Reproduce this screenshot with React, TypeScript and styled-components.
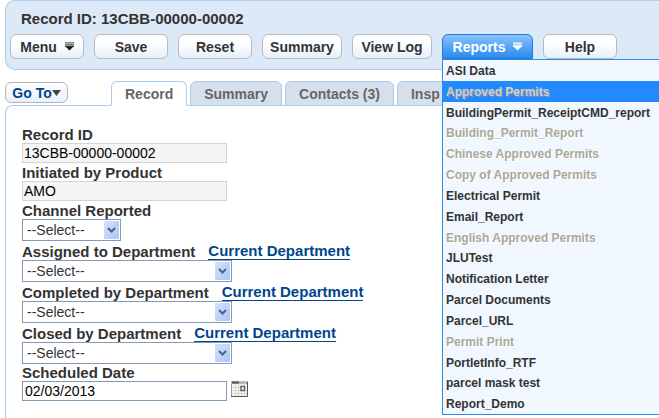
import React from "react";
import styled, { createGlobalStyle, css } from "styled-components";

const GlobalStyle = createGlobalStyle`
  * { box-sizing: border-box; }
  body { margin: 0; background: #fff; color: #333; font-family: "Liberation Sans", Arial, sans-serif; }
  button, input, select { font-family: inherit; margin: 0; }
`;

const Page = styled.div`
  display: flex;
  flex-direction: column;
  min-height: 100vh;
  padding-left: 5px;
  overflow: hidden;
`;

const Header = styled.header`
  padding: 9px 0 10px 4px;
  border: 1px solid #b0cdea;
  border-right: 0;
  border-radius: 10px 0 0 10px;
  background: #dce9f6;
`;

const Title = styled.h1`
  margin: 0 0 6px 11px;
  font-size: 15px;
  line-height: 18px;
`;

const Toolbar = styled.div`
  display: flex;
  gap: 10px;
`;

const MenuAnchor = styled.div`
  position: relative;
`;

const ToolButton = styled.button<{ $wide?: boolean; $active?: boolean }>`
  display: flex;
  align-items: center;
  justify-content: center;
  gap: 8px;
  height: 25px;
  min-width: ${(p) => (p.$wide ? 80 : 74)}px;
  padding: 0 7px;
  border: 1px solid #b9b9b9;
  border-radius: 6px;
  background: linear-gradient(#fff, #fbfdff 45%, #e6effa);
  color: #333;
  font-size: 14px;
  font-weight: bold;
  line-height: 18px;
  white-space: nowrap;
  ${(p) =>
    p.$active &&
    css`
      min-width: 91px;
      border-color: #1d7bdd;
      border-radius: 6px 6px 0 0;
      background: linear-gradient(#8cc2fc, #5ba8f8 45%, #2c8bee);
      color: #fff;
    `}
`;

const Dropdown = styled.ul`
  position: absolute;
  z-index: 2;
  top: 100%;
  left: 0;
  display: flex;
  flex-direction: column;
  width: 240px;
  max-height: calc(100vh - 62px);
  margin: 0;
  padding: 0;
  border: 1px solid #2f8be8;
  background: #f0f7ff;
  list-style: none;
`;

const DropdownRow = styled.li`
  display: flex;
  flex: 0 1 21px;
  min-height: 16px;
`;

const DropdownItem = styled.button<{ $hot?: boolean }>`
  flex: 1;
  padding: 1px 3px 0;
  border: 0;
  background: ${(p) => (p.$hot ? "#2389ff" : "transparent")};
  color: #333;
  font-size: 12px;
  font-weight: bold;
  line-height: 16px;
  text-align: left;
  white-space: nowrap;

  &:disabled {
    color: ${(p) => (p.$hot ? "#d3d3cb" : "#aca899")};
    text-shadow: 1px 1px 0 ${(p) => (p.$hot ? "#8a9099" : "#fff")};
  }
`;

const TabBar = styled.div`
  display: flex;
  align-items: flex-start;
  margin-top: 11px;
`;

const GoToButton = styled.button`
  display: flex;
  align-items: center;
  justify-content: center;
  width: 63px;
  height: 21px;
  margin-top: 1px;
  padding: 0;
  border: 1px solid #b5b5b5;
  border-radius: 6px;
  background: linear-gradient(#fff, #e8f1fb);
  color: #00458c;
  font-size: 14px;
  font-weight: bold;
  line-height: 18px;
`;

const Tabs = styled.div`
  display: flex;
  gap: 3px;
  margin-left: 43px;
`;

const Tab = styled.button<{ $active?: boolean }>`
  position: relative;
  z-index: 1;
  height: 25px;
  padding: 0 13px;
  border: 1px solid #a9cbec;
  border-bottom-color: ${(p) => (p.$active ? "#fff" : "#a9cbec")};
  border-radius: 6px 6px 0 0;
  background: ${(p) => (p.$active ? "#fff" : "#d6e0ed")};
  color: #666;
  font-size: 14px;
  font-weight: bold;
  line-height: 18px;
  white-space: nowrap;
`;

const Panel = styled.main`
  flex: 1;
  margin-top: -1px;
  padding: 20px 0 16px 16px;
  border: solid #a9cbec;
  border-width: 1px 0 0 1px;
  border-radius: 8px 0 0 0;
`;

const Form = styled.form`
  display: flex;
  flex-direction: column;
  align-items: flex-start;
`;

const LabelRow = styled.div<{ $linked?: boolean }>`
  display: flex;
  align-items: flex-end;
  gap: 13px;
  height: ${(p) => (p.$linked ? 19 : 17)}px;
  font-size: 15px;
  font-weight: bold;
  line-height: 17px;
  white-space: nowrap;
`;

const DepartmentLink = styled.a`
  border-bottom: 1px solid #00458c;
  color: #00458c;
  line-height: 17px;
  text-decoration: none;
`;

const TextField = styled.input`
  width: 205px;
  height: 20px;
  padding: 0 2px;
  border: 1px solid #7f9db9;
  border-radius: 0;
  background: #fff;
  color: #000;
  font-size: 14px;

  &:read-only {
    margin-bottom: 1px;
    padding: 0 1px;
    border-color: #d4d4d4;
    background: #f5f5f5;
  }
`;

const SelectBox = styled.div<{ $short?: boolean }>`
  position: relative;
  width: ${(p) => (p.$short ? 99 : 210)}px;
  height: 22px;
`;

const SelectField = styled.select`
  width: 100%;
  height: 100%;
  padding: 0 20px 0 4px;
  appearance: none;
  border: 1px solid #7f9db9;
  border-radius: 0;
  background: #fff;
  color: #333;
  font-size: 14px;
`;

const SelectArrow = styled.svg`
  position: absolute;
  top: 2px;
  right: 2px;
  pointer-events: none;
`;

const DateRow = styled.div`
  display: flex;
  gap: 4px;
`;

const IconButton = styled.button`
  display: flex;
  align-items: flex-start;
  padding: 0;
  border: 0;
  background: none;
`;

const MenuGlyph = ({ light }: { light?: boolean }) => (
  <svg width="9" height="9" viewBox="0 0 9 9" aria-hidden="true">
    <path d="M0 .5h9" stroke={light ? "#b5d8ff" : "#888"} />
    <path d="M0 1.5h9" stroke={light ? "#d4e8ff" : "#b0b0b0"} />
    <path d="M0 2.5h9" stroke={light ? "#b5d8ff" : "#777"} />
    <path d="M0 3.5h9" stroke={light ? "#d4e8ff" : "#999"} />
    <path d="M0 4.5h9" stroke={light ? "#fff" : "#333"} />
    <path d="M1 5h7L4.5 8.5z" fill={light ? "#fff" : "#111"} />
  </svg>
);

const CalendarIcon = () => (
  <svg width="17" height="16" viewBox="0 0 17 16" aria-hidden="true">
    <path d="M0 0h17v16H0z" fill="#f5f5f3" />
    <path d="M4.5 3v12M7.5 3v12M10.5 3v12M13.5 3v12M1 6.5h15M1 9.5h15M1 12.5h15" stroke="#d6d6d2" fill="none" />
    <path d="M.5 0v15.5" stroke="#999" />
    <path d="M0 1.5h17" stroke="#bbb" strokeWidth="3" />
    <path d="M1 1.5h7" stroke="#555" strokeWidth="2" />
    <path d="M16.5 1v14.5H0" stroke="#555" fill="none" />
    <path d="M10 5.5h3.5v4H10z" stroke="#666" strokeWidth="1.5" fill="#fff" />
  </svg>
);

type SelectProps = { id: string; short?: boolean };

const Select = ({ id, short }: SelectProps) => (
  <SelectBox $short={short}>
    <SelectField id={id} defaultValue="">
      <option value="">--Select--</option>
    </SelectField>
    <SelectArrow width="15" height="18" viewBox="0 0 15 18" aria-hidden="true">
      <defs>
        <linearGradient id={`${id}-fill`} x1="0" y1="0" x2="1" y2="1">
          <stop offset="0" stopColor="#d5e1fd" />
          <stop offset="1" stopColor="#adc4f5" />
        </linearGradient>
      </defs>
      <rect width="15" height="18" rx="1" fill={`url(#${id}-fill)`} />
      <path d="M4 7l3.5 3.5L11 7" fill="none" stroke="#4d6185" strokeWidth="2" />
    </SelectArrow>
  </SelectBox>
);

const reports: { name: string; disabled?: boolean; hot?: boolean }[] = [
  { name: "ASI Data" },
  { name: "Approved Permits", disabled: true, hot: true },
  { name: "BuildingPermit_ReceiptCMD_report" },
  { name: "Building_Permit_Report", disabled: true },
  { name: "Chinese Approved Permits", disabled: true },
  { name: "Copy of Approved Permits", disabled: true },
  { name: "Electrical Permit" },
  { name: "Email_Report" },
  { name: "English Approved Permits", disabled: true },
  { name: "JLUTest" },
  { name: "Notification Letter" },
  { name: "Parcel Documents" },
  { name: "Parcel_URL" },
  { name: "Permit Print", disabled: true },
  { name: "PortletInfo_RTF" },
  { name: "parcel mask test" },
  { name: "Report_Demo" },
];

const departments = [
  { id: "assigned", label: "Assigned to Department" },
  { id: "completed", label: "Completed by Department" },
  { id: "closed", label: "Closed by Department" },
];

export default function App() {
  return (
    <>
      <GlobalStyle />
      <Page>
        <Header>
          <Title>Record ID: 13CBB-00000-00002</Title>
          <Toolbar>
            <ToolButton>Menu <MenuGlyph /></ToolButton>
            <ToolButton>Save</ToolButton>
            <ToolButton>Reset</ToolButton>
            <ToolButton $wide>Summary</ToolButton>
            <ToolButton $wide>View Log</ToolButton>
            <MenuAnchor>
              <ToolButton $active aria-expanded="true">Reports <MenuGlyph light /></ToolButton>
              <Dropdown>
                {reports.map((r) => (
                  <DropdownRow key={r.name}>
                    <DropdownItem $hot={r.hot} disabled={r.disabled}>{r.name}</DropdownItem>
                  </DropdownRow>
                ))}
              </Dropdown>
            </MenuAnchor>
            <ToolButton>Help</ToolButton>
          </Toolbar>
        </Header>
        <TabBar>
          <GoToButton>
            Go To
            <svg width="9" height="6" viewBox="0 0 9 6" aria-hidden="true">
              <path d="M0 0h9L4.5 6z" fill="#444" />
            </svg>
          </GoToButton>
          <Tabs role="tablist">
            <Tab role="tab" aria-selected="true" $active>Record</Tab>
            <Tab role="tab" aria-selected="false">Summary</Tab>
            <Tab role="tab" aria-selected="false">Contacts (3)</Tab>
            <Tab role="tab" aria-selected="false">Insp</Tab>
          </Tabs>
        </TabBar>
        <Panel>
          <Form>
            <LabelRow><label htmlFor="record">Record ID</label></LabelRow>
            <TextField id="record" readOnly value="13CBB-00000-00002" />
            <LabelRow><label htmlFor="product">Initiated by Product</label></LabelRow>
            <TextField id="product" readOnly value="AMO" />
            <LabelRow><label htmlFor="channel">Channel Reported</label></LabelRow>
            <Select id="channel" short />
            {departments.map((d) => (
              <React.Fragment key={d.id}>
                <LabelRow $linked>
                  <label htmlFor={d.id}>{d.label}</label>
                  <DepartmentLink href="#">Current Department</DepartmentLink>
                </LabelRow>
                <Select id={d.id} />
              </React.Fragment>
            ))}
            <LabelRow><label htmlFor="scheduled">Scheduled Date</label></LabelRow>
            <DateRow>
              <TextField id="scheduled" defaultValue="02/03/2013" />
              <IconButton type="button" aria-label="Choose date"><CalendarIcon /></IconButton>
            </DateRow>
          </Form>
        </Panel>
      </Page>
    </>
  );
}
